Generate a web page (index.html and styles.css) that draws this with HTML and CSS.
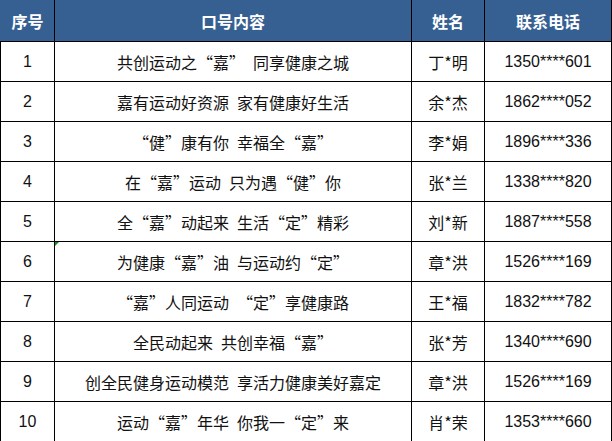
FILE: index.html
```html
<!DOCTYPE html>
<html lang="zh-CN">
<head>
<meta charset="utf-8">
<link rel="stylesheet" href="styles.css">
</head>
<body>
<table class="sheet">
  <colgroup>
    <col class="c-no"><col class="c-slogan"><col class="c-name"><col class="c-phone">
  </colgroup>
  <thead>
    <tr><th>序号</th><th>口号内容</th><th>姓名</th><th>联系电话</th></tr>
  </thead>
  <tbody>
    <tr><td class="num">1</td><td>共创运动之“嘉”&#x3000;同享健康之城</td><td>丁*明</td><td class="num">1350****601</td></tr>
    <tr><td class="num">2</td><td>嘉有运动好资源&#x2002;家有健康好生活</td><td>余*杰</td><td class="num">1862****052</td></tr>
    <tr><td class="num">3</td><td>“健”康有你&#x2002;幸福全“嘉”</td><td>李*娟</td><td class="num">1896****336</td></tr>
    <tr><td class="num">4</td><td>在“嘉”运动&#x2002;只为遇“健”你</td><td>张*兰</td><td class="num">1338****820</td></tr>
    <tr><td class="num">5</td><td>全“嘉”动起来&#x2002;生活“定”精彩</td><td>刘*新</td><td class="num">1887****558</td></tr>
    <tr><td class="num">6</td><td class="flag">为健康“嘉”油&#x2002;与运动约“定”</td><td>章*洪</td><td class="num">1526****169</td></tr>
    <tr><td class="num">7</td><td>“嘉”人同运动&#x3000;“定”享健康路</td><td>王*福</td><td class="num">1832****782</td></tr>
    <tr><td class="num">8</td><td>全民动起来&#x2002;共创幸福“嘉”</td><td>张*芳</td><td class="num">1340****690</td></tr>
    <tr><td class="num">9</td><td>创全民健身运动模范&#x2002;享活力健康美好嘉定</td><td>章*洪</td><td class="num">1526****169</td></tr>
    <tr><td class="num">10</td><td>运动“嘉”年华&#x2002;你我一“定”来</td><td>肖*荣</td><td class="num">1353****660</td></tr>
  </tbody>
</table>
</body>
</html>
```
FILE: styles.css
```css
html, body {
  margin: 0;
  padding: 0;
  background: #fff;
}
.sheet {
  border-collapse: collapse;
  table-layout: fixed;
  width: 611px;
  font-family: "Noto Sans CJK SC", sans-serif;
  font-size: 16px;
  color: #111;
}
.c-no { width: 54px; }
.c-slogan { width: 357px; }
.c-name { width: 73px; }
.c-phone { width: 127px; }
.sheet th {
  background: #366092;
  color: #fff;
  font-weight: bold;
  height: 40px;
  padding: 0;
  border: 1px solid #000;
  border-top-color: #366092;
  border-left-color: #366092;
  line-height: 1;
}
.sheet td {
  height: 39px;
  padding: 0;
  border: 1px solid #000;
  text-align: center;
  line-height: 1;
  white-space: pre;
}
.sheet td.num {
  font-family: "Liberation Sans", sans-serif;
  font-size: 16px;
}
.sheet td.flag {
  position: relative;
}
.sheet td.flag::before {
  content: "";
  position: absolute;
  left: 0;
  top: 0;
  border-top: 4px solid #1e8a1e;
  border-right: 4px solid transparent;
}
```
